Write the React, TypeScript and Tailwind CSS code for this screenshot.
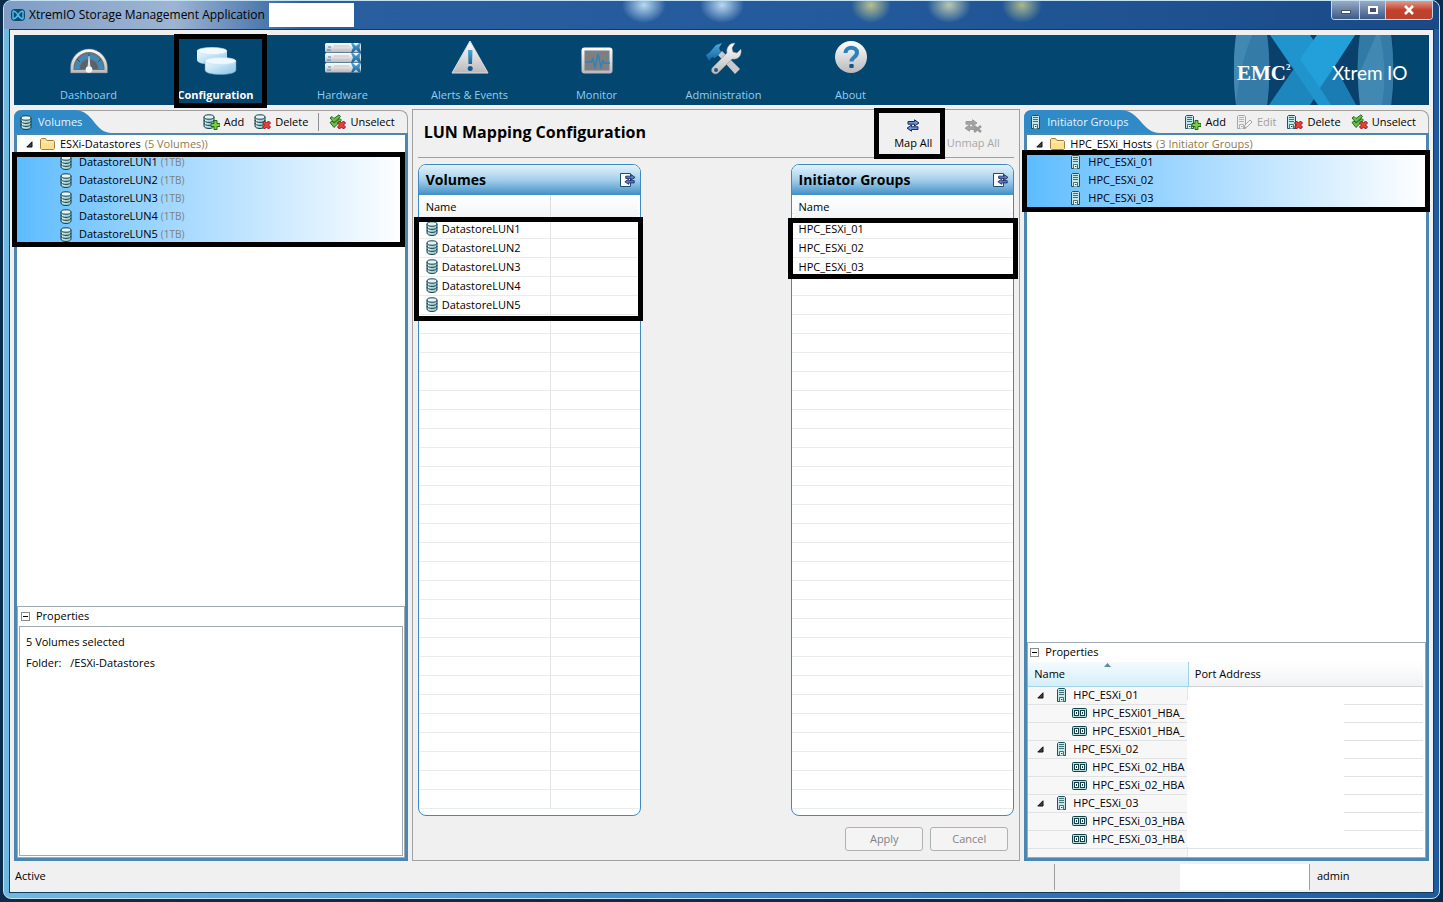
import React, { useState } from 'react';

type NavKey = 'Dashboard' | 'Configuration' | 'Hardware' | 'Alerts & Events' | 'Monitor' | 'Administration' | 'About';

const VOLUMES = ['DatastoreLUN1', 'DatastoreLUN2', 'DatastoreLUN3', 'DatastoreLUN4', 'DatastoreLUN5'];
const HOSTS = ['HPC_ESXi_01', 'HPC_ESXi_02', 'HPC_ESXi_03'];

const HBA_TREE = [
  { host: 'HPC_ESXi_01', ports: ['HPC_ESXi01_HBA_', 'HPC_ESXi01_HBA_'] },
  { host: 'HPC_ESXi_02', ports: ['HPC_ESXi_02_HBA', 'HPC_ESXi_02_HBA'] },
  { host: 'HPC_ESXi_03', ports: ['HPC_ESXi_03_HBA', 'HPC_ESXi_03_HBA'] },
];

/* ---------- Small icons ---------- */

const DiskShape = () => (
  <>
    <path d="M1 3v9c0 1.400 2.200 2.500 5 2.500s5-1.100 5-2.500V3" fill="#a9d3d6" stroke="#12414a" />
    <path d="M2.500 5.500v6.800M4 6v7" stroke="#e6f5f5" />
    <ellipse cx="6" cy="3" rx="5" ry="2.200" fill="#e4f3f3" stroke="#12414a" />
    <path d="M1 6c0 1.400 2.200 2.400 5 2.400S11 7.400 11 6M1 9c0 1.400 2.200 2.400 5 2.400s5-1 5-2.400" fill="none" stroke="#12414a" />
  </>
);

const ServerShape = ({ color = '#1d535c', fill = '#c3e6e8' }) => (
  <>
    <path d="M1.500 14.500v-12l1-1h6l1 1v12z" fill={fill} stroke={color} />
    <path d="M3 3.500h5M3 5.500h5M3 7.500h5" stroke={color} strokeWidth=".8" />
    <path d="M3.500 14.500v-4h4v4" fill="#e8f6f6" stroke={color} strokeWidth=".8" />
    <path d="M5 12.500h1.500" stroke={color} />
  </>
);

const DiskIcon = () => (
  <svg className="w-3 h-[15px] shrink-0" viewBox="0 0 12 15"><DiskShape /></svg>
);

const ServerIcon = () => (
  <svg className="w-[11px] h-4 shrink-0" viewBox="0 0 11 16"><ServerShape /></svg>
);

const FolderIcon = () => (
  <svg className="w-[15px] h-3 shrink-0" viewBox="0 0 15 12">
    <path d="M.5 10.500v-9l1-1h4l1.500 2h6.500l1 1v7l-1 1h-12z" fill="#fbe08d" stroke="#a8803a" />
    <path d="M1.500 4h12" stroke="#fff3c4" />
  </svg>
);

const HbaIcon = () => (
  <svg className="w-[15px] h-[10px] shrink-0" viewBox="0 0 15 10">
    <rect x=".5" y=".5" width="14" height="9" rx="1" fill="#b5dde0" stroke="#12414a" />
    <rect x="2.500" y="2.500" width="4" height="5" fill="#fff" stroke="#12414a" />
    <rect x="8.500" y="2.500" width="4" height="5" fill="#fff" stroke="#12414a" />
    <path d="M4 5h1M10 5h1" stroke="#12414a" strokeWidth="2" />
  </svg>
);

const Expander = () => (
  <svg className="w-[7px] h-[7px] shrink-0" viewBox="0 0 7 7"><path d="M6 .8V6H.8z" fill="#404040" stroke="#111" /></svg>
);

const PlusBadge = () => (
  <path d="M11 6.500h3v3h3v3h-3v3h-3v-3H8v-3h3z" fill="#7ad13c" stroke="#22691a" />
);

const CrossBadge = () => (
  <path d="M8.500 9l2-2 2 2 2-2 2 2-2 2 2 2-2 2-2-2-2 2-2-2 2-2z" fill="#e8403a" stroke="#8e1414" />
);

const ToolIcon = ({ base, badge }: { base: 'disk' | 'server' | 'checks'; badge: 'plus' | 'cross' | 'pencil' }) => (
  <svg className="w-[17px] h-4 shrink-0" viewBox="0 0 17 16">
    {base === 'disk' && <DiskShape />}
    {base === 'server' && (badge === 'pencil' ? <ServerShape color="#a5a5a5" fill="#eee" /> : <ServerShape />)}
    {base === 'checks' && (
      <>
        <path d="M1 4l2-1.500 2 2L10 .8l1.500 1.700L5 8.500z" fill="#6cc04a" stroke="#226b22" />
        <path d="M1 8.500L3 7l2 2 6-4.500 1.500 1.700L5 13.500z" fill="#6cc04a" stroke="#226b22" />
      </>
    )}
    {badge === 'plus' && <PlusBadge />}
    {badge === 'cross' && <CrossBadge />}
    {badge === 'pencil' && <path d="M8 14l1-3 5-5 2 2-5 5z" fill="#f4f4f4" stroke="#a5a5a5" />}
  </svg>
);

const ArrowsShape = ({ fill, stroke }: { fill: string; stroke: string }) => (
  <>
    <path d="M2 2.500h6.500V.8L13 4 8.500 7V5.200H2z" fill={fill} stroke={stroke} />
    <path d="M12 7.800H5.500V6L1 9.200l4.500 3v-1.700H12z" fill={fill} stroke={stroke} />
  </>
);

const MapCardIcon = () => (
  <svg className="w-[17px] h-4" viewBox="0 0 17 16">
    <path d="M1.500 1.500h10v13h-10z" fill="#fff" stroke="#1d4f6e" />
    <g transform="translate(5 2) scale(.85)"><ArrowsShape fill="#5b7fc4" stroke="#152a63" /></g>
  </svg>
);

/* ---------- Main navigation icons ---------- */

const NavIcon = ({ name }: { name: NavKey }) => (
  <svg className="w-11 h-11" viewBox="0 0 44 44">
    <defs>
      <linearGradient id="metal" x1="0" y1="0" x2="0" y2="1">
        <stop offset="0" stopColor="#ffffff" />
        <stop offset="1" stopColor="#b9b9bd" />
      </linearGradient>
      <linearGradient id="ice" x1="0" y1="0" x2="1" y2="1">
        <stop offset="0" stopColor="#f2faff" />
        <stop offset="1" stopColor="#86c3e8" />
      </linearGradient>
      <linearGradient id="sky" x1="0" y1="0" x2="0" y2="1">
        <stop offset="0" stopColor="#4fa9dc" />
        <stop offset="1" stopColor="#13639d" />
      </linearGradient>
    </defs>
    {name === 'Dashboard' && (
      <>
        <path d="M3.500 34V28.500a18.500 18.500 0 0 1 37 0V34z" fill="url(#metal)" stroke="#5f7688" strokeWidth=".5" />
        <path d="M6.500 31v-2a15.500 16 0 0 1 31 0v2z" fill="#6c7378" />
        <path d="M10 30a12 12.500 0 0 1 24 0" fill="none" stroke="#3b8cbd" strokeWidth="4" />
        <path d="M13 30a9 9.500 0 0 1 18 0z" fill="#5a6268" />
        <path d="M10 20l3 3M34 20l-3 3M22 15v4" stroke="#1e5478" />
        <path d="M21.500 17h1l1 12h-3z" fill="#e0e0e0" />
        <circle cx="22" cy="30.500" r="3.300" fill="#f5f5f5" />
      </>
    )}
    {name === 'Configuration' && (
      <>
        <path d="M3 12v9c0 3 7 4.500 15 4.500S33 24 33 21v-9z" fill="url(#ice)" />
        <ellipse cx="18" cy="12" rx="15" ry="3.500" fill="#f3faff" stroke="#c6e3f3" strokeWidth=".7" />
        <path d="M11 22v9c0 3 7 4.500 15.500 4.500S42 34 42 31v-9z" fill="url(#ice)" stroke="#5f9dc4" strokeWidth=".5" />
        <ellipse cx="26.500" cy="22" rx="15.500" ry="3.500" fill="#eef8ff" stroke="#c6e3f3" strokeWidth=".7" />
      </>
    )}
    {name === 'Hardware' && [4, 14, 24].map(y => (
      <g key={y}>
        <rect x="4" y={y} width="36" height="9.500" rx="1.500" fill="url(#metal)" />
        <path d={`M6 ${y + 7}h4M7 ${y + 4}h3`} stroke="#3689bd" />
        <path d={`M13 ${y + 3}h15M13 ${y + 7}h15`} stroke="#c5c5c9" />
        <path d={`M30 ${y}h2l3 3 3-3h2l-1.500 4.700L40 ${y + 9.500}h-2l-3-3-3 3h-2l2-4.700z`} fill="url(#sky)" />
      </g>
    ))}
    {name === 'Alerts & Events' && (
      <>
        <path d="M22 2l18 32H4z" fill="url(#metal)" stroke="#ddd" strokeLinejoin="round" />
        <path d="M20 11h4.500l-.5 14h-3.500z" fill="url(#sky)" />
        <circle cx="22.200" cy="29.500" r="2.500" fill="#14588a" />
      </>
    )}
    {name === 'Monitor' && (
      <>
        <rect x="6.500" y="8.500" width="31" height="26" rx="3" fill="url(#metal)" />
        <rect x="9.500" y="11.500" width="25" height="20" fill="#7e7f82" />
        <path d="M10 23h6l2-3 2 9 3-14 3 13 2-6 1 2h6" fill="none" stroke="#2f83b8" strokeWidth="1.500" />
      </>
    )}
    {name === 'Administration' && (
      <>
        <path d="M16 16l4-4 18 18-5 5z" fill="#c9c9cd" />
        <path d="M4 16l4-3 6-7 6-2-3 5 2 4-6 6-3-1-3 4z" fill="url(#sky)" />
        <path d="M11 28l14-14c-1-5 2-10 8-10l-3 5 1 4 4 1 4-4c1 7-3 11-9 10L16 34c-4 3-9-2-5-6z" fill="url(#metal)" stroke="#888" strokeWidth=".5" />
        <circle cx="14" cy="31" r="2" fill="#26587b" />
      </>
    )}
    {name === 'About' && (
      <>
        <circle cx="22" cy="18" r="16" fill="url(#metal)" />
        <path d="M16.500 14c0-7 11.500-7 11.500-.5 0 5-5.500 4.500-5.500 9" fill="none" stroke="#2c83bc" strokeWidth="4" />
        <rect x="20.300" y="25" width="4.400" height="4" rx="1" fill="#14588a" />
      </>
    )}
  </svg>
);

const BrandLogo = () => (
  <svg className="w-[195px] h-[70px] shrink-0" viewBox="0 0 195 70">
    <rect width="160" height="70" fill="#0a416c" />
    <path d="M2 0h31c3 22 3 48 0 70H2C-1 48-1 22 2 0z" fill="#4189b3" />
    <path d="M18 0h15c3 22 3 48 0 70H2C4 44 10 20 18 0z" fill="#2b739f" opacity=".6" />
    <path d="M126 0h31c3 22 3 48 0 70h-31c-3-22-3-48 0-70z" fill="#4189b3" />
    <path d="M126 0h16l-18 42c-1-14 0-28 2-42z" fill="#2b739f" opacity=".7" />
    <path d="M146 0h11c3 22 3 48 0 70h-9c4-24 3-46-2-70z" fill="#2b739f" opacity=".6" />
    <path d="M83 0h38L76 70H35z" fill="#1d86bd" />
    <path d="M36 0h40l46 70H84L36 0z" fill="#2094cd" />
    <path d="M83 0h38L86 53 66 24z" fill="#239fd9" />
    <path d="M101 31L86 53l11 17h25z" fill="#1a7cb2" />
    <text x="3" y="45" fill="#fff" fontSize="21" fontWeight="700" fontFamily="Liberation Serif, serif">EMC</text>
    <text x="52" y="35" fill="#fff" fontSize="9" fontWeight="700" fontFamily="Liberation Serif, serif">2</text>
    <text x="98" y="45" fill="#fff" fontSize="19" fontFamily="Lato, sans-serif">Xtrem</text>
    <text x="153" y="45" fill="#fff" fontSize="19" fontFamily="Lato, sans-serif">IO</text>
  </svg>
);

/* ---------- Building blocks ---------- */

const Marker = ({ className }: { className: string }) => (
  <div className={`absolute z-10 border-[5px] border-black pointer-events-none ${className}`} />
);

const ToolButton = ({ children, label, disabled }: { children: React.ReactNode; label: string; disabled?: boolean }) => (
  <button disabled={disabled} className="flex items-center gap-1 text-black disabled:text-[#a0a0a0]">
    {children}
    {label}
  </button>
);

interface SidePanelProps {
  title: string;
  icon: React.ReactNode;
  wide?: boolean;
  tools: React.ReactNode;
  children: React.ReactNode;
}

const SidePanel: React.FC<SidePanelProps> = ({ title, icon, wide, tools, children }) => (
  <section className="flex flex-col min-w-0 min-h-0">
    <header className="relative flex items-center justify-between h-[23px] pl-[6px] pr-3 rounded-t-lg border-t border-r border-[#a0a0a0] bg-[#f0f0f0]">
      <svg className={`absolute left-0 -top-px h-[23px] ${wide ? 'w-[136px]' : 'w-[98px]'}`} viewBox={wide ? '0 0 136 23' : '0 0 98 23'}>
        {wide
          ? <path d="M0 23V8Q0 0 8 0h88c20 0 22 23 40 23z" fill="#2f8ac5" />
          : <path d="M0 23V8Q0 0 8 0h52c20 0 20 23 38 23z" fill="#2f8ac5" />}
      </svg>
      <h2 className="relative flex items-center gap-[6px] text-[#e4f5ff]">{icon}{title}</h2>
      <div className="relative flex items-center gap-[10px]">{tools}</div>
    </header>
    <div className="flex flex-col flex-1 min-h-0 border-[3px] border-t-2 border-[#4c87b2] bg-white">{children}</div>
  </section>
);

const TreeFolder = ({ name, note }: { name: string; note: string }) => (
  <div className="flex items-center h-[18px] pl-[9px] whitespace-nowrap">
    <Expander />
    <span className="pl-[7px] pr-[5px]"><FolderIcon /></span>
    {name}<span className="pl-1 text-[#8c7a4a]">{note}</span>
  </div>
);

const PropertiesTitle = ({ open, onToggle }: { open: boolean; onToggle: () => void }) => (
  <button onClick={onToggle} className="flex items-center gap-[6px] h-[19px] pl-[2px]">
    <span className="flex items-center justify-center w-[9px] h-[9px] border border-[#8a8a8a]">
      <span className="w-[5px] h-px bg-black" />
    </span>
    <span className={open ? '' : 'text-gray-600'}>Properties</span>
  </button>
);

const MappingCard = ({ title, items, split, icon, marker }: { title: string; items: string[]; split?: boolean; icon?: boolean; marker: string }) => (
  <section className="flex flex-col rounded-lg border border-[#3c8abf] bg-white">
    <header className="flex items-center justify-between h-[30px] pl-[7px] pr-1 rounded-t-[7px] bg-gradient-to-b from-[#e3f3fb] via-[#a3cfea] to-[#3e8fc6]">
      <h3 className="text-sm font-bold">{title}</h3>
      <button aria-label={`Map ${title}`}><MapCardIcon /></button>
    </header>
    <div className={`relative flex-1 mb-[6px] px-[2px] ${split
      ? 'bg-[linear-gradient(90deg,transparent_131px,#e2e6e8_131px,#e2e6e8_132px,transparent_132px),repeating-linear-gradient(#fff_0_18px,#e9eced_18px_19px)] bg-[position:0_0,0_25px]'
      : 'bg-[repeating-linear-gradient(#fff_0_18px,#e9eced_18px_19px)] bg-[position:0_25px]'}`}>
      <table className="w-full table-fixed">
        <thead>
          <tr className="h-6 bg-gradient-to-b from-white to-[#f2f3f5]">
            <th className={`pl-[5px] text-left font-normal ${split ? 'w-[130px] border-r border-[#dcdfe2]' : ''}`}>Name</th>
            {split && <th aria-label="Details" />}
          </tr>
        </thead>
        <tbody>
          {items.map(item => (
            <tr key={item} className="h-[19px]">
              <td className="p-0">
                <span className="flex items-center gap-1 pl-[5px] leading-[18px] whitespace-nowrap">
                  {icon && <DiskIcon />}
                  {item}
                </span>
              </td>
              {split && <td />}
            </tr>
          ))}
        </tbody>
      </table>
      <Marker className={marker} />
    </div>
  </section>
);

/* ---------- Application ---------- */

const NAV: NavKey[] = ['Dashboard', 'Configuration', 'Hardware', 'Alerts & Events', 'Monitor', 'Administration', 'About'];

export default function App() {
  const [active, setActive] = useState<NavKey>('Configuration');
  const [volumeProps, setVolumeProps] = useState(true);
  const [groupProps, setGroupProps] = useState(true);

  return (
    <div className="h-screen flex flex-col px-[3px] pb-[3px] bg-[#0c2c4c] text-[11px] text-black font-['Open_Sans',sans-serif]">
      <div className="flex flex-col flex-1 min-h-0 px-[5px] border border-[#c5e2f2] rounded-lg bg-[linear-gradient(90deg,#6fb9e0,#3f86c4_50%,#1f5a9f)]">
        {/* Title bar */}
        <div className="-mx-[5px] flex justify-between h-7 pl-[7px] rounded-t-lg bg-[radial-gradient(ellipse_22px_18px_at_640px_4px,#b9d8f2,transparent),radial-gradient(ellipse_22px_18px_at_718px_4px,#b9d8f2,transparent),radial-gradient(ellipse_20px_18px_at_867px_4px,#b5c08f,transparent),radial-gradient(ellipse_22px_18px_at_945px_4px,#b9c8b2,transparent),radial-gradient(ellipse_20px_18px_at_1018px_4px,#a9b88f,transparent),linear-gradient(90deg,#7e9cc4,#9db5d2_170px,#2a5f9f_300px,#235a9b_60%,#194a86)]">
          <div className="flex items-center gap-1">
            <svg className="w-[14px] h-3" viewBox="0 0 14 12">
              <rect width="14" height="12" rx="4" fill="#0c4a6e" />
              <path d="M2 2c5 0 5 8 10 8M12 2C7 2 7 10 2 10M2 2v8M12 2v8" fill="none" stroke="#4fb8e6" strokeWidth="1.500" />
            </svg>
            <h1 className="text-xs">XtremIO Storage Management Application</h1>
            <div className="w-[85px] h-6 bg-white" />
          </div>
          <div className="flex h-[19px] mr-[6px] rounded-b border border-t-0 border-[#c8d4e4] overflow-hidden">
            <button aria-label="Minimize" className="flex items-end justify-center w-7 pb-[5px] border-r border-[#c8d4e4] bg-gradient-to-b from-[#9aabc6] to-[#3d5a86]">
              <span className="w-[10px] h-1 border border-[#44536b] bg-white" />
            </button>
            <button aria-label="Maximize" className="flex items-center justify-center w-[26px] border-r border-[#c8d4e4] bg-gradient-to-b from-[#9aabc6] to-[#3d5a86]">
              <span className="w-[10px] h-2 border-2 border-white bg-[#44536b]" />
            </button>
            <button aria-label="Close" className="flex items-center justify-center w-[46px] bg-gradient-to-b from-[#e09a8a] via-[#c2412b] to-[#b8432f]">
              <svg className="w-3 h-[10px]" viewBox="0 0 12 10"><path d="M2 1l8 8M10 1L2 9" stroke="#fff" strokeWidth="2.500" /></svg>
            </button>
          </div>
        </div>

        <div className="flex flex-col flex-1 min-h-0 mb-[5px] px-1 pt-[5px] border border-[#123a5c] bg-[#f0f0f0]">
          {/* Navigation */}
          <nav className="flex justify-between h-[70px] shrink-0 pl-[11px] bg-[#03466f]">
            <div className="flex">
              {NAV.map(name => (
                <button
                  key={name}
                  onClick={() => setActive(name)}
                  className={`relative flex flex-col items-center w-[127px] pt-1 ${active === name ? 'font-bold text-white' : 'text-[#8fd0ee]'}`}
                >
                  <NavIcon name={name} />
                  <span className="mt-1 leading-4">{name}</span>
                  {name === 'Configuration' && <Marker className="left-[22px] -top-px w-[93px] h-[74px]" />}
                </button>
              ))}
            </div>
            <BrandLogo />
          </nav>

          <main className="grid flex-1 min-h-0 grid-cols-[394fr_609fr_405fr] grid-rows-[minmax(0,1fr)] gap-1 mt-[5px]">
            {/* Volumes */}
            <SidePanel
              title="Volumes"
              icon={<DiskIcon />}
              tools={
                <>
                  <ToolButton label="Add"><ToolIcon base="disk" badge="plus" /></ToolButton>
                  <ToolButton label="Delete"><ToolIcon base="disk" badge="cross" /></ToolButton>
                  <span className="w-px h-[18px] bg-[#909090]" />
                  <ToolButton label="Unselect"><ToolIcon base="checks" badge="cross" /></ToolButton>
                </>
              }
            >
              <div className="flex-1 min-h-0">
                <TreeFolder name="ESXi-Datastores" note="(5 Volumes))" />
                <div className="relative bg-gradient-to-r from-[#5cbcff] to-white">
                  <ul>
                    {VOLUMES.map(v => (
                      <li key={v} className="flex items-center gap-[7px] h-[18px] pl-[43px]">
                        <DiskIcon />
                        <span>{v} <span className="text-[10px] text-[#7d8077]">(1TB)</span></span>
                      </li>
                    ))}
                  </ul>
                  <Marker className="-left-[5px] right-0 -top-px -bottom-1" />
                </div>
              </div>
              <div className="flex flex-col h-[252px] border border-[#a0a8b0] px-px pb-px">
                <PropertiesTitle open={volumeProps} onToggle={() => setVolumeProps(!volumeProps)} />
                {volumeProps && (
                  <div className="flex-1 pt-1 pl-[6px] border border-[#a0a8b0] leading-[21px]">
                    <p>5 Volumes selected</p>
                    <p>Folder: <span className="pl-[6px]">/ESXi-Datastores</span></p>
                  </div>
                )}
              </div>
            </SidePanel>

            {/* LUN mapping */}
            <section className="flex flex-col min-w-0 min-h-0 -mt-px px-[5px] border border-[#a0a0a0]">
              <header className="flex justify-between h-12 border-b border-[#a0a0a0]">
                <h2 className="pl-[6px] pt-[10px] text-base leading-6 font-bold">LUN Mapping Configuration</h2>
                <div className="flex gap-3 pr-[14px]">
                  <button className="relative flex flex-col items-center w-[42px] pt-[9px] whitespace-nowrap">
                    <svg className="w-[14px] h-[13px]" viewBox="0 0 14 13"><ArrowsShape fill="#6f92d2" stroke="#152a63" /></svg>
                    <span className="mt-[3px] leading-4">Map All</span>
                    <Marker className="-left-[18px] -right-[11px] -top-[2px] h-[51px]" />
                  </button>
                  <button disabled className="flex flex-col items-center w-[54px] pt-[9px] whitespace-nowrap text-[#a8a8a8]">
                    <svg className="w-[18px] h-[14px]" viewBox="0 0 18 14">
                      <ArrowsShape fill="#a3a3a3" stroke="#9a9a9a" />
                      <path d="M10 7l7 6M17 7l-7 6" stroke="#9a9a9a" strokeWidth="2.500" />
                    </svg>
                    <span className="mt-[2px] leading-4">Unmap All</span>
                  </button>
                </div>
              </header>
              <div className="grid grid-cols-[3fr_2fr_3fr] flex-1 min-h-0 mt-[6px]">
                <MappingCard title="Volumes" items={VOLUMES} split icon marker="-left-[5px] -right-[3px] top-[22px] h-[104px]" />
                <div />
                <MappingCard title="Initiator Groups" items={HOSTS} marker="-left-1 -right-[5px] top-[23px] h-[61px]" />
              </div>
              <footer className="flex justify-end gap-[7px] pt-[11px] pb-[9px] pr-[6px]">
                <button disabled className="w-[78px] h-6 rounded-[3px] border border-[#adb2b5] bg-[#f4f4f4] text-[#838383]">Apply</button>
                <button disabled className="w-[78px] h-6 rounded-[3px] border border-[#adb2b5] bg-[#f4f4f4] text-[#838383]">Cancel</button>
              </footer>
            </section>

            {/* Initiator groups */}
            <SidePanel
              title="Initiator Groups"
              icon={<ServerIcon />}
              wide
              tools={
                <>
                  <ToolButton label="Add"><ToolIcon base="server" badge="plus" /></ToolButton>
                  <ToolButton label="Edit" disabled><ToolIcon base="server" badge="pencil" /></ToolButton>
                  <ToolButton label="Delete"><ToolIcon base="server" badge="cross" /></ToolButton>
                  <ToolButton label="Unselect"><ToolIcon base="checks" badge="cross" /></ToolButton>
                </>
              }
            >
              <div className="flex-1 min-h-0">
                <TreeFolder name="HPC_ESXi_Hosts" note="(3 Initiator Groups)" />
                <div className="relative bg-gradient-to-r from-[#5cbcff] to-white">
                  <ul>
                    {HOSTS.map(h => (
                      <li key={h} className="flex items-center gap-[7px] h-[18px] pl-[43px]">
                        <ServerIcon />
                        {h}
                      </li>
                    ))}
                  </ul>
                  <Marker className="-left-[5px] -right-1 -top-[3px] -bottom-[5px]" />
                </div>
              </div>
              <div className="flex flex-col h-[216px] border border-[#a0a8b0]">
                <PropertiesTitle open={groupProps} onToggle={() => setGroupProps(!groupProps)} />
                {groupProps && (
                  <div className="relative flex-1 min-h-0 overflow-hidden pr-[2px] bg-[linear-gradient(90deg,#f7f7f7_159px,#e3e8ea_159px,#e3e8ea_160px,#fff_160px)]">
                    <table className="w-full table-fixed">
                      <thead>
                        <tr className="h-6">
                          <th className="relative w-[160px] pl-[6px] text-left font-normal border-r border-b border-[#a5d3e6] bg-gradient-to-b from-[#f4fbfe] to-[#d5eef8]">
                            Name
                            <svg className="absolute left-[76px] top-px w-[7px] h-1" viewBox="0 0 7 4"><path d="M0 4l3.500-4L7 4z" fill="#5d8aa0" /></svg>
                          </th>
                          <th className="pl-[6px] text-left font-normal border-b border-[#d5d5d5] bg-gradient-to-b from-white to-[#f1f2f4]">Port Address</th>
                        </tr>
                      </thead>
                      <tbody>
                        {HBA_TREE.map(group => (
                          <React.Fragment key={group.host}>
                            <tr className="h-[18px] border-b border-[#e0e3e5]">
                              <td className="p-0">
                                <span className="flex items-center h-[17px] pl-[9px] whitespace-nowrap">
                                  <Expander />
                                  <span className="pl-3 pr-[6px]"><ServerIcon /></span>
                                  {group.host}
                                </span>
                              </td>
                              <td />
                            </tr>
                            {group.ports.map((port, i) => (
                              <tr key={i} className="h-[18px] border-b border-[#e0e3e5]">
                                <td className="p-0">
                                  <span className="flex items-center gap-[5px] h-[17px] pl-11 whitespace-nowrap">
                                    <HbaIcon />
                                    {port}
                                  </span>
                                </td>
                                <td />
                              </tr>
                            ))}
                          </React.Fragment>
                        ))}
                      </tbody>
                    </table>
                    <div className="absolute left-[159px] right-[81px] top-[38px] bottom-[10px] bg-white" />
                  </div>
                )}
              </div>
            </SidePanel>
          </main>

          {/* Status bar */}
          <footer className="flex items-center justify-between h-[31px] shrink-0">
            <span className="pl-px">Active</span>
            <div className="flex items-center h-[26px]">
              <span className="w-[126px] h-full border-l border-[#a0a0a0]" />
              <span className="w-[129px] h-full bg-white" />
              <span className="flex items-center w-[120px] h-full pl-[7px] border-l border-[#a0a0a0]">admin</span>
            </div>
          </footer>
        </div>
      </div>
    </div>
  );
}
